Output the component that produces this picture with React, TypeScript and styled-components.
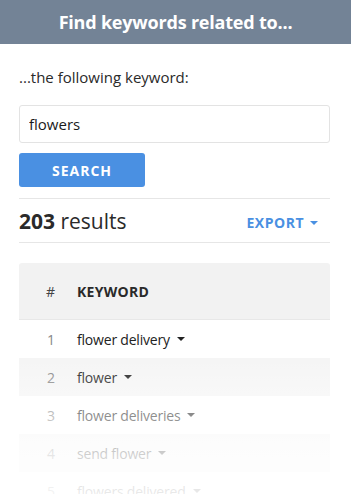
import React from 'react';
import styled, { createGlobalStyle } from 'styled-components';

const blue = '#4a90e2';
const text = '#333333';
const line = '#e6e6e6';

const keywords = [
  'flower delivery',
  'flower',
  'flower deliveries',
  'send flower',
  'flowers delivered',
];

const GlobalStyle = createGlobalStyle`
  html, body {
    margin: 0;
    padding: 0;
    background: #ffffff;
  }
  body {
    font-family: "Open Sans", "Noto Sans", Arial, sans-serif;
    color: ${text};
    width: 351px;
    height: 494px;
    overflow: hidden;
  }
`;

const Page = styled.div`
  width: 351px;
  height: 494px;
  overflow: hidden;
  display: flex;
  flex-direction: column;
`;

const TopBar = styled.header`
  height: 44px;
  flex: none;
  background: #738396;
  color: #ffffff;
  display: flex;
  align-items: center;
  justify-content: center;
  font-size: 18px;
  font-weight: 700;
  letter-spacing: -0.2px;
`;

const Body = styled.div`
  padding: 0 21px 0 19px;
  display: flex;
  flex-direction: column;
`;

const Prompt = styled.p`
  margin: 23px 0 0;
  font-size: 15px;
  line-height: 20px;
  color: #2a2a2a;
`;

const Input = styled.input`
  margin-top: 18px;
  height: 38px;
  box-sizing: border-box;
  width: 100%;
  border: 1px solid #e3e3e3;
  border-radius: 3px;
  padding: 0 9px;
  font-family: inherit;
  font-size: 15px;
  font-weight: 400;
  color: #1a1a1a;
  outline: none;
`;

const SearchButton = styled.button`
  margin-top: 10px;
  width: 126px;
  height: 34px;
  border: none;
  border-radius: 3px;
  background: ${blue};
  color: #ffffff;
  font-family: inherit;
  font-size: 14px;
  font-weight: 700;
  letter-spacing: 1px;
  cursor: pointer;
`;

const ResultsBar = styled.div`
  margin-top: 11px;
  height: 43px;
  border-top: 1px solid ${line};
  border-bottom: 1px solid ${line};
  display: flex;
  align-items: center;
  justify-content: space-between;
`;

const Count = styled.div`
  font-size: 21px;
  color: #2a2a2a;

  b {
    font-weight: 700;
  }
`;

const Export = styled.button`
  border: none;
  background: none;
  padding: 0 12px 0 0;
  color: ${blue};
  font-family: inherit;
  font-size: 14px;
  font-weight: 700;
  letter-spacing: 0.5px;
  display: flex;
  align-items: center;
  gap: 6px;
  margin-top: 4px;
`;

const Caret = styled.span<{ $color?: string }>`
  display: inline-block;
  width: 0;
  height: 0;
  border-left: 4px solid transparent;
  border-right: 4px solid transparent;
  border-top: 4px solid ${({ $color }) => $color || 'currentColor'};
`;

const TableWrap = styled.div`
  margin-top: 20px;
  position: relative;
`;

const HeadRow = styled.div`
  height: 56px;
  background: #f2f2f2;
  border-radius: 3px 3px 0 0;
  border-bottom: 1px solid #e8e8e8;
  display: grid;
  grid-template-columns: 58px 1fr;
  align-items: center;
  font-size: 14px;
`;

const HeadNum = styled.span`
  text-align: right;
  padding-right: 22px;
  color: #444;
`;

const HeadKeyword = styled.span`
  font-weight: 700;
  letter-spacing: 0.3px;
  color: #2a2a2a;
`;

const Row = styled.div<{ $shade: boolean }>`
  height: 38px;
  background: ${({ $shade }) => ($shade ? '#f5f5f5' : '#ffffff')};
  display: grid;
  grid-template-columns: 58px 1fr;
  align-items: center;
  font-size: 14px;
`;

const Num = styled.span`
  text-align: right;
  padding-right: 22px;
  color: #888;
`;

const Keyword = styled.span`
  display: flex;
  align-items: center;
  gap: 7px;
  color: #222;
  letter-spacing: -0.2px;
`;

const Fade = styled.div`
  position: absolute;
  left: 0;
  right: 0;
  top: 95px;
  bottom: 0;
  background: linear-gradient(
    to bottom,
    rgba(255, 255, 255, 0) 0%,
    rgba(255, 255, 255, 0.45) 35%,
    rgba(255, 255, 255, 0.8) 65%,
    rgba(255, 255, 255, 0.95) 100%
  );
  pointer-events: none;
`;

export default function App() {
  return (
    <Page>
      <GlobalStyle />
      <TopBar>Find keywords related to...</TopBar>
      <Body>
        <Prompt>...the following keyword:</Prompt>
        <Input defaultValue="flowers" />
        <SearchButton>SEARCH</SearchButton>
        <ResultsBar>
          <Count>
            <b>203</b> results
          </Count>
          <Export>
            EXPORT <Caret />
          </Export>
        </ResultsBar>
        <TableWrap>
          <HeadRow>
            <HeadNum>#</HeadNum>
            <HeadKeyword>KEYWORD</HeadKeyword>
          </HeadRow>
          {keywords.map((kw, i) => (
            <Row key={kw} $shade={i % 2 === 1}>
              <Num>{i + 1}</Num>
              <Keyword>
                {kw} <Caret $color="#222" />
              </Keyword>
            </Row>
          ))}
          <Fade />
        </TableWrap>
      </Body>
    </Page>
  );
}
